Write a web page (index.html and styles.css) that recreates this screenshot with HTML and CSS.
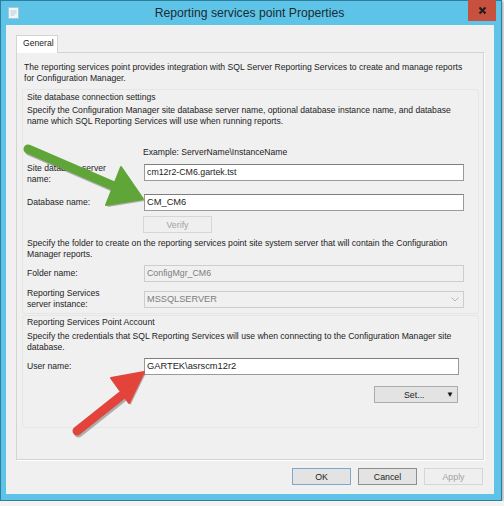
FILE: index.html
```html
<!DOCTYPE html>
<html lang="en">
<head>
    <meta charset="UTF-8">
    <title>Reporting services point Properties</title>
    <link rel="stylesheet" href="styles.css">
</head>
<body>
    <div class="window">
        <div class="titlebar">
            <svg class="app-icon" width="11" height="12" viewBox="0 0 11 12">
                <rect x="0.5" y="0.5" width="10" height="11" fill="#eef6fa" stroke="#a9c6d3"/>
                <path d="M2.5 4h6M2.5 6h6M2.5 8h4" stroke="#b8cdd6" stroke-width="1"/>
            </svg>
            <div class="title">Reporting services point Properties</div>
            <div class="close">
                <svg width="9" height="9" viewBox="0 0 9 9">
                    <path d="M1.5 1.5l6 6M7.5 1.5l-6 6" stroke="#1e1e1e" stroke-width="2"/>
                </svg>
            </div>
        </div>

        <div class="client">
            <div class="tabs">
                <div class="tab">General</div>
            </div>
            <div class="panel">
                <p class="intro">The reporting services point provides integration with SQL Server Reporting Services to create and manage reports for Configuration Manager.</p>

                <div class="group group-site">
                    <div class="group-title">Site database connection settings</div>
                    <p class="desc">Specify the Configuration Manager site database server name, optional database instance name, and database name which SQL Reporting Services will use when running reports.</p>
                    <div class="example">Example: ServerName\InstanceName</div>

                    <div class="row row-tall">
                        <label>Site database server<br>name:</label>
                        <div class="field">cm12r2-CM6.gartek.tst</div>
                    </div>
                    <div class="row row-db">
                        <label>Database name:</label>
                        <div class="field field-big">CM_CM6</div>
                    </div>
                    <button class="btn btn-disabled verify">Verify</button>

                    <p class="desc desc-folder">Specify the folder to create on the reporting services point site system server that will contain the Configuration Manager reports.</p>
                    <div class="row row-folder">
                        <label>Folder name:</label>
                        <div class="field field-disabled">ConfigMgr_CM6</div>
                    </div>
                    <div class="row row-tall row-instance">
                        <label>Reporting Services<br>server instance:</label>
                        <div class="field field-disabled combo">
                            <span>MSSQLSERVER</span>
                            <svg width="8" height="5" viewBox="0 0 8 5">
                                <path d="M0.5 0.5l3.5 3.5 3.5-3.5" fill="none" stroke="#b5b5b5" stroke-width="1"/>
                            </svg>
                        </div>
                    </div>
                </div>

                <div class="group group-account">
                    <div class="group-title">Reporting Services Point Account</div>
                    <p class="desc desc-account">Specify the credentials that SQL Reporting Services will use when connecting to the Configuration Manager site database.</p>
                    <div class="row row-user">
                        <label>User name:</label>
                        <div class="field field-big user">GARTEK\asrscm12r2</div>
                    </div>
                    <div class="set-wrap">
                        <button class="btn set-btn"><span>Set...</span><span class="caret">&#9660;</span></button>
                    </div>
                </div>
            </div>

            <div class="actions">
                <button class="btn btn-default">OK</button>
                <button class="btn btn-cancel">Cancel</button>
                <button class="btn btn-disabled">Apply</button>
            </div>
        </div>
    </div>

    <!-- annotation arrows drawn over the dialog -->
    <svg class="arrows" width="504" height="506" viewBox="0 0 504 506">
        <g opacity="0.35" transform="translate(1.5 2)">
            <line x1="28" y1="149" x2="116" y2="187" stroke="#333" stroke-width="9" stroke-linecap="round"/>
            <polygon points="143,199 121,167 106,205" fill="#333"/>
            <line x1="77" y1="431" x2="121" y2="396" stroke="#333" stroke-width="9" stroke-linecap="round"/>
            <polygon points="144,372 111,378 129,403" fill="#333"/>
        </g>
        <line x1="28" y1="149" x2="116" y2="187" stroke="#5fa537" stroke-width="9" stroke-linecap="round"/>
        <polygon points="143,199 121,167 106,205" fill="#5fa537" stroke="#5fa537" stroke-width="2" stroke-linejoin="round"/>
        <line x1="77" y1="431" x2="121" y2="396" stroke="#e2443b" stroke-width="9" stroke-linecap="round"/>
        <polygon points="144,372 111,378 129,403" fill="#e2443b" stroke="#e2443b" stroke-width="2" stroke-linejoin="round"/>
    </svg>
</body>
</html>
```

FILE: styles.css
```css
/* Dialog */
body {
    margin: 0;
    padding: 0;
    background-color: #f3f3f3;
    font-family: 'Liberation Sans', Arial, sans-serif;
    font-size: 8.6px;
    color: #1c1c1c;
}
.window {
    width: 502px;
    height: 501px;
    box-sizing: border-box;
    border: 1px solid #2f7d9d;
    background-color: #5ec4e7;
    display: flex;
    flex-direction: column;
    box-shadow: 1px 1px 3px rgba(0,0,0,0.35);
}
.titlebar {
    height: 24px;
    display: flex;
    align-items: flex-start;
}
.app-icon {
    margin: 6px 0 0 7px;
}
.title {
    flex-grow: 1;
    text-align: center;
    font-size: 12.2px;
    line-height: 24px;
    color: #1b2a33;
    padding-left: 12px;
}
.close {
    width: 28px;
    height: 21px;
    margin: -1px 5px 0 0;
    background-color: #c8503f;
    display: flex;
    align-items: center;
    justify-content: center;
}
.client {
    flex-grow: 1;
    margin: 0 7px 6px 5px;
    background-color: #f0f0f0;
    padding: 10px 10px 0 10px;
    box-sizing: border-box;
}
.tabs {
    display: flex;
    height: 17px;
}
.tab {
    width: 42px;
    box-sizing: border-box;
    border: 1px solid #d4d4d4;
    border-bottom: none;
    background-color: #ffffff;
    line-height: 15px;
    padding-left: 6px;
    margin-bottom: -1px;
    position: relative;
}
.panel {
    height: 408px;
    box-sizing: border-box;
    border: 1px solid #d4d4d4;
    box-shadow: 1px 1px 0 #ffffff;
    padding: 9px 4px 0 5px;
}
p {
    margin: 0;
}
.intro {
    line-height: 11px;
    padding-left: 2px;
    width: 450px;
}
.group {
    width: 457px;
    box-sizing: border-box;
    border: 1px solid #e6e6e6;
    border-radius: 3px;
    padding: 2px 0 3px 4px;
    margin-top: 5px;
}
.group-title {
    line-height: 11px;
}
.desc {
    line-height: 11px;
    margin-top: 2px;
    width: 432px;
}
.example {
    line-height: 11px;
    margin-top: 20px;
    padding-left: 116px;
}
.row {
    display: flex;
    align-items: center;
    margin-top: 5px;
}
.row label {
    width: 117px;
    flex-shrink: 0;
    line-height: 11px;
}
.row-tall {
    align-items: flex-start;
}
.row-tall .field {
    margin-top: 1px;
}
.row-db {
    margin-top: 9px;
}
.field {
    width: 320px;
    height: 17px;
    box-sizing: border-box;
    border: 1px solid #9a9a9a;
    border-top-color: #7e7e7e;
    background-color: #ffffff;
    font-size: 8.8px;
    line-height: 15px;
    padding-left: 2px;
}
.field-big {
    font-size: 9.3px;
}
.field-disabled {
    background-color: #f0f0f0;
    border-color: #cdcdcd;
    color: #7d7d7d;
}
.combo {
    display: flex;
    align-items: center;
    justify-content: space-between;
    padding-right: 4px;
    font-size: 9.2px;
}
.row-instance {
    margin-top: 6px;
}
.row-instance .field {
    margin-top: 3px;
}
.user {
    width: 315px;
}
.btn {
    height: 17px;
    box-sizing: border-box;
    border: 1px solid #acacac;
    background-color: #e3e3e3;
    font-family: 'Liberation Sans', Arial, sans-serif;
    font-size: 8.8px;
    color: #1c1c1c;
    padding: 0;
    width: 59px;
}
.btn-disabled {
    border-color: #d6d6d6;
    background-color: #efefef;
    color: #a2a2a2;
}
.verify {
    display: block;
    width: 69px;
    margin: 5px 0 0 116px;
}
.desc-folder {
    margin-top: 5px;
    width: 440px;
}
.group-account {
    margin-top: 1px;
    padding: 1px 0 24px 4px;
}
.desc-account {
    margin-top: 3px;
    width: 440px;
}
.set-wrap {
    display: flex;
    justify-content: flex-end;
    width: 431px;
    margin-top: 11px;
}
.set-btn {
    width: 84px;
    display: flex;
    align-items: center;
    padding: 0 3px 0 29px;
    justify-content: space-between;
}
.caret {
    font-size: 8px;
    color: #111;
}
.actions {
    display: flex;
    justify-content: flex-end;
    gap: 7px;
    margin-top: 8px;
    padding-right: 1px;
}
.btn-default {
    border-color: #7fa6cc;
}
.btn-cancel {
    border-color: #8e8e8e;
}
.arrows {
    position: absolute;
    top: 0;
    left: 0;
    pointer-events: none;
}
```
